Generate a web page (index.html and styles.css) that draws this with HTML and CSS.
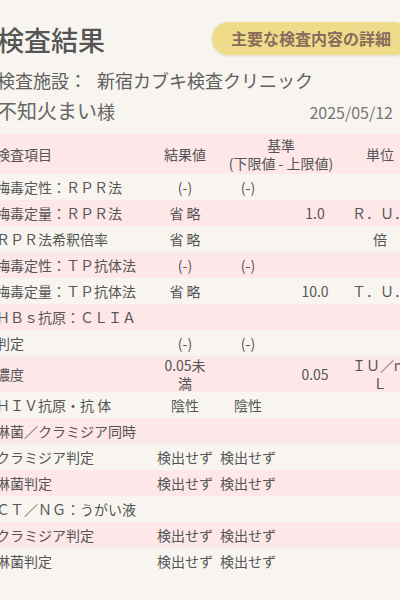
FILE: index.html
```html
<!DOCTYPE html>
<html lang="ja">
<head>
<meta charset="utf-8">
<title>検査結果</title>
<link rel="stylesheet" href="styles.css">
</head>
<body>
<div class="page">
  <div class="top">
    <h1 class="title">検査結果</h1>
    <div class="btn">主要な検査内容の詳細</div>
  </div>
  <div class="facility">検査施設：<span class="clinic">新宿カブキ検査クリニック</span></div>
  <div class="name-row">
    <div class="name">不知火まい<span class="sama">様</span></div>
    <div class="date">2025/05/12</div>
  </div>
  <table class="results">
    <colgroup>
      <col class="c-item"><col class="c-res"><col class="c-low"><col class="c-up"><col class="c-unit">
    </colgroup>
    <thead>
      <tr>
        <th class="item">検査項目</th>
        <th>結果値</th>
        <th colspan="2">基準<br>(下限値 - 上限値)</th>
        <th>単位</th>
      </tr>
    </thead>
    <tbody>
      <tr><td class="item">梅毒定性：ＲＰＲ法</td><td>(-)</td><td>(-)</td><td></td><td></td></tr>
      <tr><td class="item">梅毒定量：ＲＰＲ法</td><td>省 略</td><td></td><td>1.0</td><td>Ｒ．Ｕ．</td></tr>
      <tr><td class="item">ＲＰＲ法希釈倍率</td><td>省 略</td><td></td><td></td><td>倍</td></tr>
      <tr><td class="item">梅毒定性：ＴＰ抗体法</td><td>(-)</td><td>(-)</td><td></td><td></td></tr>
      <tr><td class="item">梅毒定量：ＴＰ抗体法</td><td>省 略</td><td></td><td>10.0</td><td>Ｔ．Ｕ．</td></tr>
      <tr><td class="item">ＨＢｓ抗原：ＣＬＩＡ</td><td></td><td></td><td></td><td></td></tr>
      <tr><td class="item">判定</td><td>(-)</td><td>(-)</td><td></td><td></td></tr>
      <tr><td class="item">濃度</td><td class="wrap">0.05未<br>満</td><td></td><td>0.05</td><td class="wrap">ＩＵ／ｍ<br>Ｌ</td></tr>
      <tr><td class="item">ＨＩＶ抗原・抗 体</td><td>陰性</td><td>陰性</td><td></td><td></td></tr>
      <tr><td class="item">淋菌／クラミジア同時</td><td></td><td></td><td></td><td></td></tr>
      <tr><td class="item">クラミジア判定</td><td>検出せず</td><td>検出せず</td><td></td><td></td></tr>
      <tr><td class="item">淋菌判定</td><td>検出せず</td><td>検出せず</td><td></td><td></td></tr>
      <tr><td class="item">ＣＴ／ＮＧ：うがい液</td><td></td><td></td><td></td><td></td></tr>
      <tr><td class="item">クラミジア判定</td><td>検出せず</td><td>検出せず</td><td></td><td></td></tr>
      <tr><td class="item">淋菌判定</td><td>検出せず</td><td>検出せず</td><td></td><td></td></tr>
    </tbody>
  </table>
</div>
</body>
</html>
```

FILE: styles.css
```css
html, body {
  margin: 0;
  padding: 0;
}
body {
  background: #f8f5f0;
  overflow: hidden;
  font-family: "Noto Sans CJK JP", "Noto Sans", sans-serif;
  color: #555;
}
.page {
  width: 420px;
  margin-left: -3px;
  padding-top: 20px;
}
.top {
  display: flex;
  justify-content: space-between;
  align-items: flex-start;
  height: 40px;
}
.title {
  margin: 0;
  font-size: 27px;
  font-weight: 500;
  line-height: 40px;
  color: #555;
}
.btn {
  margin-top: 2px;
  margin-right: 7px;
  padding: 0 19px;
  height: 33px;
  line-height: 33px;
  border-radius: 17px;
  background: #efdc8b;
  color: #8a6b5c;
  font-size: 16px;
  font-weight: 700;
  box-shadow: 0 1px 3px rgba(150, 120, 60, 0.25);
}
.facility {
  margin-top: 8px;
  font-size: 18px;
  line-height: 24px;
  color: #5f5f5f;
}
.clinic {
  margin-left: 10px;
}
.name-row {
  margin-top: 6px;
  display: flex;
  justify-content: space-between;
  align-items: baseline;
  padding-right: 24px;
}
.name {
  font-size: 20px;
  line-height: 26px;
  color: #666;
}
.sama {
  font-size: 18px;
}
.date {
  font-size: 16px;
  color: #777;
}
.results {
  margin-top: 10px;
  margin-left: -1px;
  width: 416px;
  table-layout: fixed;
  border-collapse: collapse;
  font-size: 14px;
}
.c-item { width: 160px; }
.c-res { width: 58px; }
.c-low { width: 68px; }
.c-up { width: 66px; }
.c-unit { width: 64px; }
.results th {
  font-weight: 400;
  line-height: 18px;
  padding: 2px 0;
  text-align: center;
  vertical-align: middle;
  color: #555;
}
.results thead tr {
  background: #fde7e8;
}
.results td {
  padding: 2px 0;
  line-height: 22px;
  text-align: center;
  vertical-align: middle;
  white-space: nowrap;
  color: #555;
}
.results td.wrap {
  padding: 0;
  line-height: 18px;
}
.results .item {
  text-align: left;
}
.results tbody tr:nth-child(even) {
  background: #fde7e8;
}
```
